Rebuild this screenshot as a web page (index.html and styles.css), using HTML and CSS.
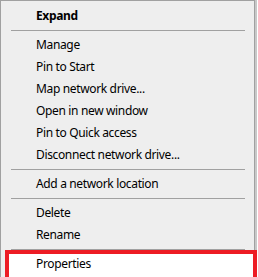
FILE: index.html
```html
<!DOCTYPE html>
<html lang="en">
<head>
    <meta charset="UTF-8">
    <title>Context menu</title>
    <link rel="stylesheet" href="styles.css">
</head>
<body>
    <div class="menu">
        <div class="item bold">Expand</div>
        <div class="sep"></div>
        <div class="item">Manage</div>
        <div class="item">Pin to Start</div>
        <div class="item">Map network drive...</div>
        <div class="item">Open in new window</div>
        <div class="item">Pin to Quick access</div>
        <div class="item">Disconnect network drive...</div>
        <div class="sep"></div>
        <div class="item">Add a network location</div>
        <div class="sep"></div>
        <div class="item">Delete</div>
        <div class="item">Rename</div>
        <div class="sep"></div>
        <div class="item marked"><span>Properties</span></div>
    </div>
</body>
</html>
```
FILE: styles.css
```css
html, body {
    margin: 0;
    padding: 0;
    background-color: #ffffff;
    overflow: hidden;
}
body {
    width: 258px;
    height: 277px;
    font-family: "Noto Sans", "Open Sans", sans-serif;
    font-size: 12px;
    letter-spacing: -0.35px;
    color: #000;
}
.menu {
    width: 253px;
    height: 272px;
    padding-top: 4px;
    background-color: #eeeeee;
    border-top: 1px solid #a0a0a0;
    border-left: 1px solid #a0a0a0;
    border-right: 1px solid #a0a0a0;
    box-shadow: 2px 0 0 #c8c8c8;
}
.item {
    height: 22px;
    line-height: 22px;
    padding-left: 35px;
    white-space: nowrap;
}
.bold {
    font-weight: bold;
}
.sep {
    height: 1px;
    margin: 3px 9px 3px 10px;
    background-color: #a0a0a0;
}
/* red highlight box drawn over the last row */
.marked {
    position: relative;
}
.marked::before {
    content: "";
    position: absolute;
    left: 4px;
    top: -3px;
    width: 244px;
    height: 23px;
    border: 4px solid #ed1c24;
    background-color: #ffffff;
}
.marked span {
    position: relative;
}
```
